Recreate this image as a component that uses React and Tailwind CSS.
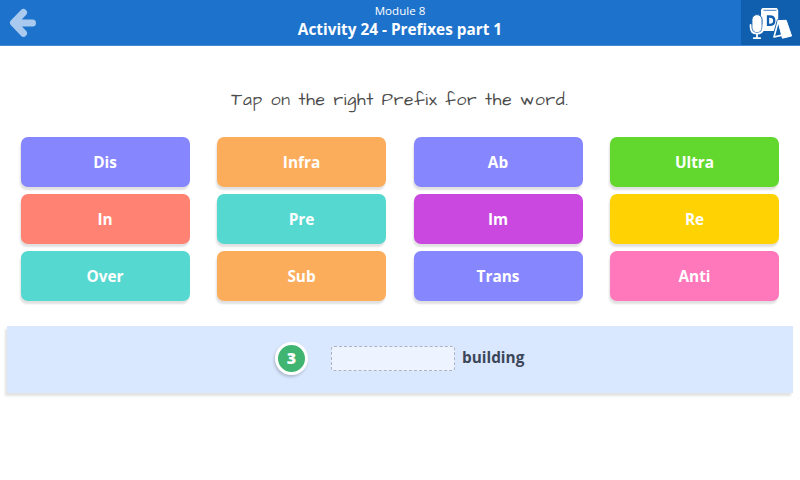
import React from "react";

const prefixes = [
  ["Dis", "bg-[#8686ff]"],
  ["Infra", "bg-[#fbad5b]"],
  ["Ab", "bg-[#8686ff]"],
  ["Ultra", "bg-[#62d82f]"],
  ["In", "bg-[#ff8273]"],
  ["Pre", "bg-[#55d8cf]"],
  ["Im", "bg-[#ca48e0]"],
  ["Re", "bg-[#ffd203]"],
  ["Over", "bg-[#55d8cf]"],
  ["Sub", "bg-[#fbad5b]"],
  ["Trans", "bg-[#8686ff]"],
  ["Anti", "bg-[#ff78bb]"],
];

function BackArrow() {
  return (
    <svg width="48" height="45" viewBox="0 0 48 45" fill="none" aria-label="Back">
      <path d="M23.5 12.5 13.5 22.8l10 10.4M15 23h17.5" stroke="#a9caee" strokeWidth="7" strokeLinecap="round" strokeLinejoin="round" />
      <path d="M10 23 22 11v24Z" fill="#a9caee" />
    </svg>
  );
}

function ToolsIcon() {
  return (
    <svg width="59" height="45" viewBox="0 0 59 45" fill="none">
      <path d="M20 9.5 21.5 8H36L37.2 10.5V31H20Z" fill="#fff" />
      <path d="M22.5 10.3H35.5" stroke="#105fae" strokeWidth=".8" />
      <path d="M27 16.5h1.7c3.2 0 4.6 1.5 4.6 4.2s-1.4 4.2-4.6 4.2H27Z" stroke="#105fae" strokeWidth="2.3" />
      <path d="M36 19.5 31 37.5H40L52 36V19.5Z" fill="#105fae" />
      <path d="M37.2 21.5 33 37 40 35.4" stroke="#fff" strokeWidth="1.6" strokeLinecap="round" strokeLinejoin="round" />
      <path d="M36.8 20.6 45.2 20.3 50.6 36 41.4 38.2Z" fill="#fff" stroke="#fff" strokeWidth="1" strokeLinejoin="round" />
      <rect x="10.9" y="14.6" width="10.2" height="18.2" rx="5.1" fill="#fff" stroke="#105fae" strokeWidth="1" />
      <path d="M9.6 25v2c0 4.3 2.7 6.6 6.4 6.6s6.4-2.3 6.4-6.6v-2M16 34v4M12.8 38.2h6.4" stroke="#fff" strokeWidth="1.8" strokeLinecap="round" />
    </svg>
  );
}

export default function App() {
  return (
    <div className="h-[480px] w-[800px] overflow-hidden bg-white font-['Open_Sans','Noto_Sans',sans-serif]">
      <header className="flex h-[46px] justify-between border-b border-[#4589d4] bg-[#1d72cc] text-white">
        <button className="w-[59px]"><BackArrow /></button>
        <div className="flex flex-col items-center pt-[3px] text-center">
          <p className="text-[11.6px] leading-[16px]">Module 8</p>
          <h1 className="text-[15.35px] font-bold leading-[21px]">Activity 24 - Prefixes part 1</h1>
        </div>
        <button className="h-[45px] w-[59px] bg-[#105fae]"><ToolsIcon /></button>
      </header>

      <main>
        <p className="flex h-[91px] items-center justify-center whitespace-nowrap pt-[17px] font-['Architects_Daughter','Lato',cursive] text-[17.4px] tracking-[0.76px] text-[#4c4c4c]">
          Tap on the right Prefix for the word.
        </p>
        <div className="grid grid-cols-4 gap-x-[27.5px] gap-y-[7px] pl-[20.5px] pr-[21px]">
          {prefixes.map(([label, color]) => (
            <button
              key={label}
              className={`flex h-[50px] items-center justify-center rounded-[7px] pt-[2px] text-[15.35px] font-bold text-white shadow-[-1px_3px_2px_rgba(0,0,0,0.12)] ${color}`}
            >
              {label}
            </button>
          ))}
        </div>
        <section className="mx-[7px] mt-[25px] flex h-[67px] items-center bg-[#dae8ff] pl-[268px] shadow-[-2px_3px_2px_rgba(0,0,0,0.11)]">
          <div className="mt-[-2px] flex h-[33px] w-[33px] items-center justify-center rounded-full border-[3px] border-white bg-[#40b572] pb-px text-[16px] font-extrabold text-white shadow-[-1px_2px_3px_rgba(0,0,0,0.2)]">
            3
          </div>
          <div className="mt-[-2px] ml-[23px] h-[25px] w-[124px] rounded-[3px] border border-dashed border-[#abb2c0] bg-[#edf4ff]" />
          <span className="mt-[-3px] ml-[7px] text-[15.35px] font-bold text-[#3c4659]">building</span>
        </section>
      </main>
    </div>
  );
}
